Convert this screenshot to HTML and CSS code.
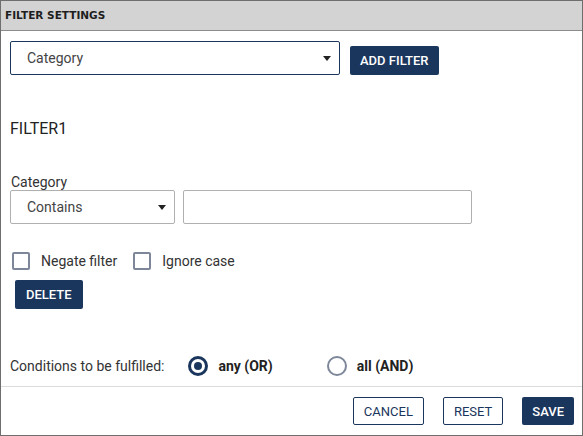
FILE: index.html
```html
<!DOCTYPE html>
<html lang="en">
<head>
    <meta charset="UTF-8">
    <meta name="viewport" content="width=device-width, initial-scale=1.0">
    <title>Filter Settings</title>
    <link rel="stylesheet" href="styles.css">
</head>
<body>
    <div class="dialog">
        <div class="dialog-header">FILTER SETTINGS</div>

        <div class="dialog-body">
            <div class="add-row">
                <div class="select select-wide">
                    <span>Category</span>
                    <span class="caret"></span>
                </div>
                <button class="btn btn-primary">ADD FILTER</button>
            </div>

            <div class="filter">
                <h2 class="filter-title">FILTER1</h2>
                <label class="field-label">Category</label>
                <div class="field-row">
                    <div class="select select-narrow">
                        <span>Contains</span>
                        <span class="caret"></span>
                    </div>
                    <input class="text-input" type="text">
                </div>
                <div class="check-row">
                    <label class="check"><span class="box"></span>Negate filter</label>
                    <label class="check"><span class="box"></span>Ignore case</label>
                </div>
                <button class="btn btn-primary btn-delete">DELETE</button>
            </div>

            <div class="conditions">
                <span class="conditions-label">Conditions to be fulfilled:</span>
                <label class="radio"><span class="dot checked"></span>any (OR)</label>
                <label class="radio"><span class="dot"></span>all (AND)</label>
            </div>
        </div>

        <div class="dialog-footer">
            <button class="btn btn-outline">CANCEL</button>
            <button class="btn btn-outline">RESET</button>
            <button class="btn btn-primary">SAVE</button>
        </div>
    </div>
</body>
</html>
```

FILE: styles.css
```css
body {
    margin: 0;
    font-family: Roboto, 'Liberation Sans', sans-serif;
    color: #333;
    background: #fff;
}
.dialog {
    width: 583px;
    height: 436px;
    box-sizing: border-box;
    border: 1px solid #6e6e6e;
    display: flex;
    flex-direction: column;
}
.dialog-header {
    height: 29px;
    line-height: 29px;
    background: #d3d3d3;
    border-bottom: 1px solid #8c8c8c;
    padding-left: 4px;
    font-family: 'DejaVu Sans', sans-serif;
    font-size: 10.5px;
    font-weight: bold;
    color: #1e1e1e;
}
.dialog-body {
    flex: 1;
    padding: 10px 9px 0;
}
.add-row {
    display: flex;
    align-items: flex-end;
    gap: 10px;
}
.select {
    box-sizing: border-box;
    height: 34px;
    display: flex;
    align-items: center;
    justify-content: space-between;
    padding: 0 8px 0 16px;
    font-size: 14px;
    color: #444;
    border-radius: 2px;
    background: #fff;
}
.select-wide {
    width: 330px;
    border: 1px solid #1b365d;
}
.select-narrow {
    width: 165px;
    border: 1px solid #b0b0b0;
}
.caret {
    width: 0;
    height: 0;
    border-left: 4px solid transparent;
    border-right: 4px solid transparent;
    border-top: 5px solid #222;
}
.btn {
    box-sizing: border-box;
    height: 29px;
    padding: 0 10px;
    font-family: Roboto, 'Liberation Sans', sans-serif;
    font-size: 13px;
    font-weight: 500;
    border-radius: 2px;
    cursor: pointer;
}
.btn-primary {
    background: #1b365d;
    color: #fff;
    border: none;
}
.btn-outline {
    background: #fff;
    color: #1b365d;
    border: 1px solid #1b365d;
    font-weight: normal;
}
.filter-title {
    margin: 44px 0 0;
    font-size: 16px;
    font-weight: normal;
    line-height: 20px;
    color: #222;
}
.field-label {
    display: block;
    margin-top: 35px;
    font-size: 14px;
    line-height: 16px;
    padding-left: 1px;
}
.field-row {
    display: flex;
    gap: 8px;
}
.text-input {
    box-sizing: border-box;
    width: 289px;
    height: 34px;
    margin: 0;
    border: 1px solid #b0b0b0;
    border-radius: 2px;
}
.check-row {
    display: flex;
    gap: 16px;
    margin-top: 27px;
    padding-left: 2px;
}
.check {
    display: flex;
    align-items: center;
    gap: 11px;
    font-size: 14px;
    height: 20px;
}
.box {
    box-sizing: border-box;
    width: 18px;
    height: 18px;
    border: 2px solid #7d8799;
    border-radius: 2px;
}
.btn-delete {
    margin: 9px 0 0 5px;
    padding: 0 11px;
}
.conditions {
    display: flex;
    align-items: center;
    margin-top: 46px;
    height: 22px;
    font-size: 14px;
}
.conditions-label {
    margin-right: 24px;
}
.radio {
    display: flex;
    align-items: center;
    gap: 10px;
    font-weight: bold;
    color: #222;
    margin-right: 54px;
}
.dot {
    box-sizing: border-box;
    width: 20px;
    height: 20px;
    border-radius: 50%;
    border: 2px solid #7d8799;
    display: flex;
    align-items: center;
    justify-content: center;
}
.dot.checked {
    border: 3px solid #1b365d;
}
.dot.checked::after {
    content: '';
    width: 8px;
    height: 8px;
    border-radius: 50%;
    background: #1b365d;
}
.dialog-footer {
    display: flex;
    justify-content: flex-end;
    gap: 19px;
    padding: 10px 8px 10px;
    border-top: 1px solid #dcdcdc;
}
.dialog-footer .btn {
    height: 28px;
}
```
